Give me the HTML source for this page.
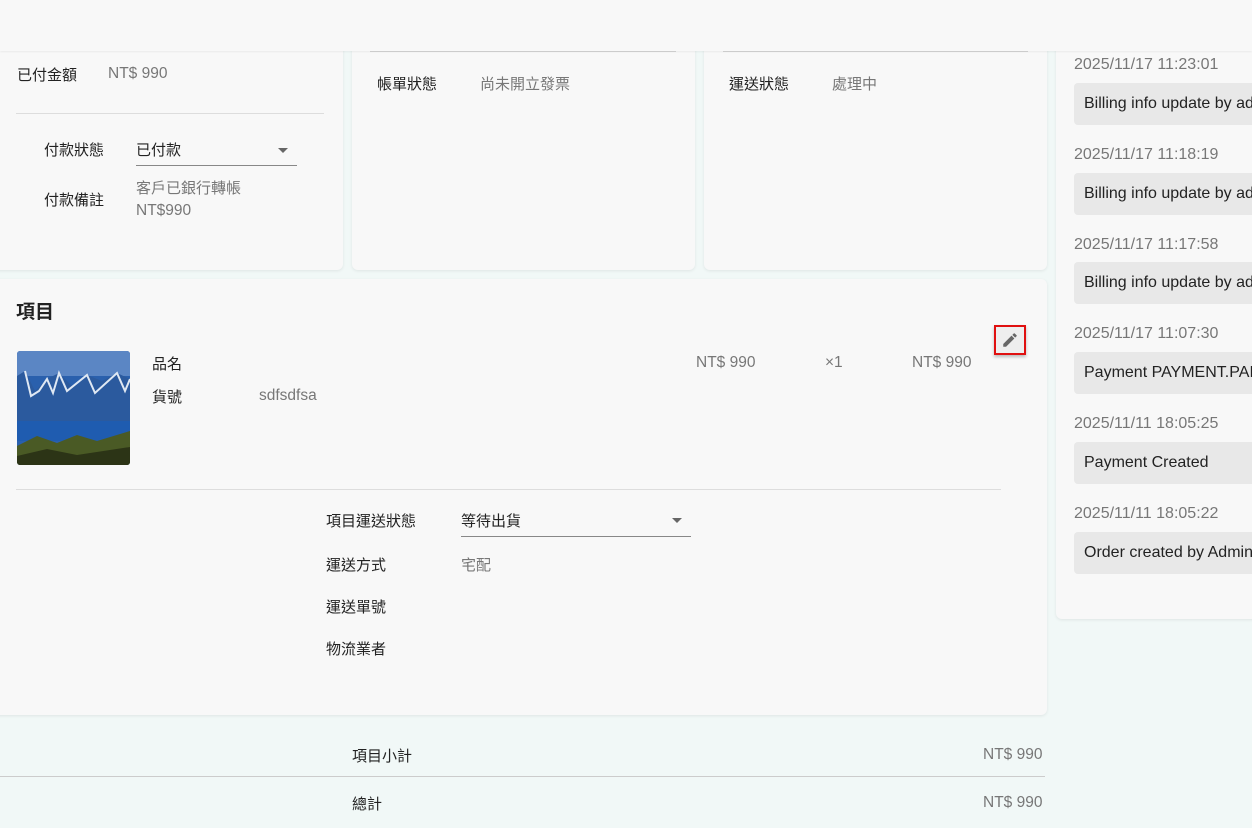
<!DOCTYPE html>
<html><head><meta charset="utf-8"><style>
body{margin:0;width:1252px;height:828px;overflow:hidden;background:#f1f8f7;font-family:"Liberation Sans","Noto Sans CJK TC",sans-serif;font-size:15px;color:#222;position:relative}
.a{position:absolute;white-space:nowrap}
.card{position:absolute;background:#f8f8f8;border-radius:6px;box-shadow:0 1px 3px rgba(0,0,0,.08)}
.g{color:#777}
.l{font-size:15.5px}
.line{position:absolute;height:1px;background:#ddd}
.tm{position:absolute;left:1074px;color:#777;font-size:16px}
.bx{position:absolute;left:1074px;width:200px;height:42px;background:#e8e8e8;border-radius:4px;font-size:16px;line-height:42px;padding-left:10px;box-sizing:border-box;white-space:nowrap;overflow:hidden}
.tri{position:absolute;width:0;height:0;border-left:5px solid transparent;border-right:5px solid transparent;border-top:5px solid #666}
</style></head><body>
<div class="card" style="left:-10px;top:-10px;width:353px;height:280px"></div>
<div class="card" style="left:352px;top:-10px;width:343px;height:280px"></div>
<div class="card" style="left:704px;top:-10px;width:343px;height:280px"></div>
<div class="card" style="left:-10px;top:279px;width:1057px;height:436px"></div>
<div class="card" style="left:1056px;top:-10px;width:210px;height:629px"></div>
<div style="position:absolute;left:0;top:0;width:1252px;height:51px;background:#f8f8f8;box-shadow:0 1px 2px rgba(0,0,0,.06)"></div>

<div class="line" style="left:370px;top:51px;width:306px;background:#ccc"></div>
<div class="line" style="left:723px;top:51px;width:305px;background:#ccc"></div>

<div class="a" style="left:17px;top:64px">已付金額</div>
<div class="a g l" style="left:108px;top:65px">NT$ 990</div>
<div class="line" style="left:16px;top:113px;width:308px"></div>
<div class="a" style="left:44px;top:139px">付款狀態</div>
<div class="a" style="left:136px;top:139px">已付款</div>
<div class="tri" style="left:278px;top:148px"></div>
<div class="line" style="left:136px;top:165px;width:161px;background:#888"></div>
<div class="a" style="left:44px;top:189px">付款備註</div>
<div class="a g" style="left:136px;top:177px">客戶已銀行轉帳</div>
<div class="a g l" style="left:136px;top:202px">NT$990</div>

<div class="a" style="left:377px;top:73px">帳單狀態</div>
<div class="a g" style="left:480px;top:73px">尚未開立發票</div>
<div class="a" style="left:729px;top:73px">運送狀態</div>
<div class="a g" style="left:832px;top:73px">處理中</div>

<div class="a" style="left:16px;top:297px;font-size:19px;font-weight:bold">項目</div>
<svg class="a" style="left:17px;top:351px;border-radius:3px" width="113" height="114" viewBox="0 0 113 114">
<rect width="113" height="114" fill="#2a60ad"/>
<rect width="113" height="25" fill="#5b86c4"/>
<path d="M0 25 L8 20 L18 40 L30 28 L42 22 L55 35 L70 24 L85 30 L100 22 L113 28 L113 70 L0 70Z" fill="#2b5a9e"/>
<path d="M8 20 L14 45 L22 40 L30 28 L36 42 L42 22 L50 40 L70 24 L78 42 L100 22 L108 40 L113 28" fill="none" stroke="#dfe8f3" stroke-width="2"/>
<rect y="70" width="113" height="20" fill="#1f5cb0"/>
<path d="M0 95 L20 85 L40 92 L60 84 L80 90 L113 80 L113 114 L0 114Z" fill="#4a5a25"/>
<path d="M0 105 L30 98 L60 104 L113 96 L113 114 L0 114Z" fill="#2c3416"/>
</svg>
<div class="a" style="left:152px;top:353px">品名</div>
<div class="a" style="left:152px;top:386px">貨號</div>
<div class="a g l" style="left:259px;top:387px">sdfsdfsa</div>
<div class="a g l" style="left:696px;top:354px">NT$ 990</div>
<div class="a g l" style="left:825px;top:354px">×1</div>
<div class="a g l" style="left:912px;top:354px">NT$ 990</div>
<div class="a" style="left:994px;top:325px;width:32px;height:30px;border:2px solid #e01010;box-sizing:border-box;background:#eee;box-shadow:0 2px 3px rgba(0,0,0,.25)"></div>
<svg class="a" style="left:1001px;top:331px" width="18" height="18" viewBox="0 0 24 24"><path d="M3 17.25V21h3.75L17.81 9.94l-3.75-3.75L3 17.25zM20.71 7.04a1 1 0 0 0 0-1.41l-2.34-2.34a1 1 0 0 0-1.41 0l-1.83 1.83 3.75 3.75 1.83-1.83z" fill="#666"/></svg>
<div class="line" style="left:16px;top:489px;width:985px"></div>
<div class="a" style="left:326px;top:510px">項目運送狀態</div>
<div class="a" style="left:461px;top:510px">等待出貨</div>
<div class="tri" style="left:672px;top:518px"></div>
<div class="line" style="left:461px;top:536px;width:230px;background:#888"></div>
<div class="a" style="left:326px;top:554px">運送方式</div>
<div class="a g" style="left:461px;top:554px">宅配</div>
<div class="a" style="left:326px;top:596px">運送單號</div>
<div class="a" style="left:326px;top:638px">物流業者</div>

<div class="a" style="left:352px;top:745px">項目小計</div>
<div class="a g l" style="left:983px;top:746px">NT$ 990</div>
<div class="line" style="left:0;top:776px;width:1045px;background:#ccc"></div>
<div class="a" style="left:352px;top:793px">總計</div>
<div class="a g l" style="left:983px;top:794px">NT$ 990</div>

<div class="tm" style="top:56px">2025/11/17 11:23:01</div>
<div class="bx" style="top:83px">Billing info update by admin</div>
<div class="tm" style="top:146px">2025/11/17 11:18:19</div>
<div class="bx" style="top:173px">Billing info update by admin</div>
<div class="tm" style="top:236px">2025/11/17 11:17:58</div>
<div class="bx" style="top:262px">Billing info update by admin</div>
<div class="tm" style="top:325px">2025/11/17 11:07:30</div>
<div class="bx" style="top:352px">Payment PAYMENT.PAID</div>
<div class="tm" style="top:415px">2025/11/11 18:05:25</div>
<div class="bx" style="top:442px">Payment Created</div>
<div class="tm" style="top:505px">2025/11/11 18:05:22</div>
<div class="bx" style="top:532px">Order created by Admin</div>
</body></html>
